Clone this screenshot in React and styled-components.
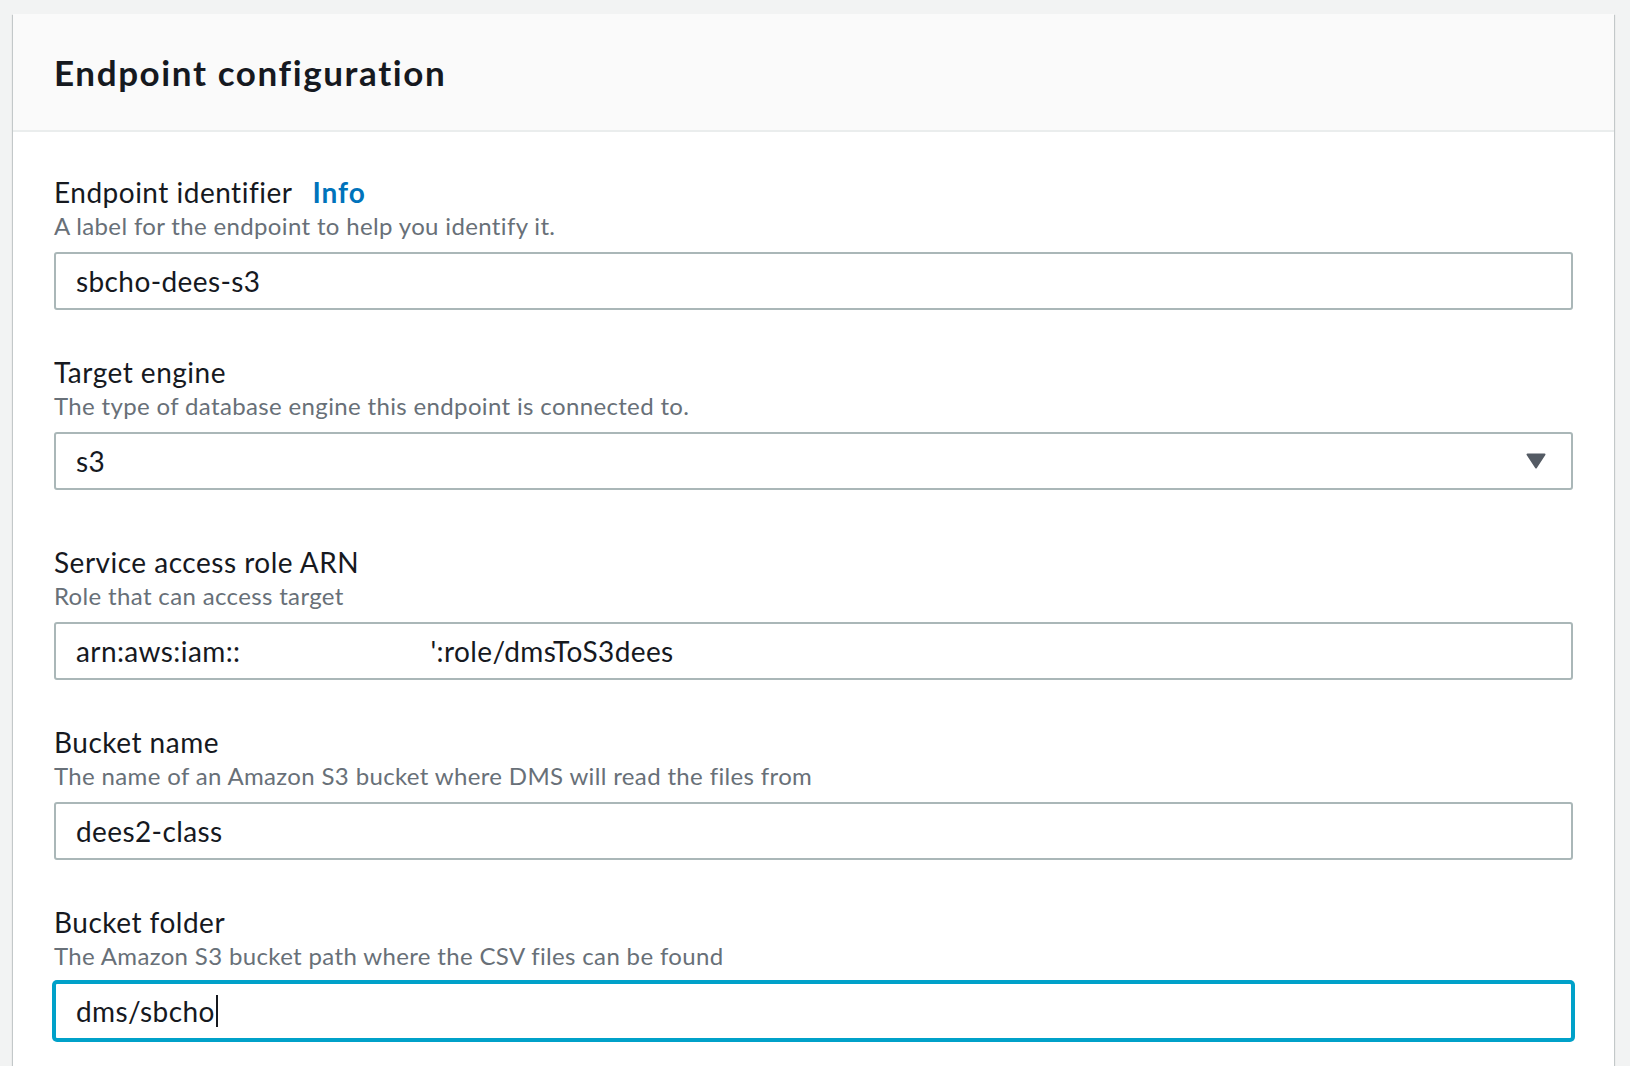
import React from 'react';
import styled, { createGlobalStyle } from 'styled-components';

const GlobalStyle = createGlobalStyle`
body {
    margin: 0;
    background: #f2f3f3;
    font-family: Lato, "Open Sans", sans-serif;
    color: #16191f;
}
`

const Page = styled.div`
padding: 14px 16px 0 13px;
`

const Panel = styled.section`
background: #fff;
box-shadow: 0 1px 1px 0 rgba(0,28,36,.3), 1px 1px 1px 0 rgba(0,28,36,.15), -1px 1px 1px 0 rgba(0,28,36,.15);
`

const Header = styled.header`
height: 116px;
display: flex;
align-items: center;
padding: 0 41px;
background: #fafafa;
border-bottom: 2px solid #eaeded;
`

const Title = styled.h2`
margin: 0;
font-size: 35px;
font-weight: 700;
line-height: 44px;
letter-spacing: 1.6px;
`

const Body = styled.div`
padding: 42px 41px;
display: flex;
flex-direction: column;
gap: 44px;
`

const Field = styled.div`
display: flex;
flex-direction: column;
`

const Label = styled.div`
font-size: 28px;
line-height: 36px;
letter-spacing: 0.5px;
`

const InfoLink = styled.a`
margin-left: 20px;
color: #0073bb;
font-weight: 700;
letter-spacing: 1px;
text-decoration: none;
`

const Description = styled.div`
font-size: 24px;
line-height: 32px;
letter-spacing: 0.35px;
color: #687078;
margin-bottom: 10px;
`

const Box = styled.div`
box-sizing: border-box;
height: 58px;
display: flex;
align-items: center;
padding: 0 20px;
background: #fff;
border: 2px solid ${props => props.focused ? "#00a1c9" : "#aab7b8"};
border-radius: 3px;
box-shadow: ${props => props.focused ? "0 0 0 2px #00a1c9" : "none"};
font-size: 28px;
letter-spacing: 0.4px;
color: #16191f;
white-space: pre;
`

const SelectBox = styled(Box)`
justify-content: space-between;
padding-right: 25px;
margin-bottom: 10px;
`

// the account number is blanked out in the reference
const Redaction = styled.span`
display: inline-block;
width: 190px;
height: 1px;
`

const Caret = styled.span`
display: inline-block;
width: 2px;
height: 32px;
margin-left: 1px;
background: #16191f;
`

function ArrowDown() {
    return (
        <svg width="20" height="16" viewBox="0 0 20 16">
            <path d="M1.5 1.5 L18.5 1.5 L10 14.5 Z" fill="#545b64" stroke="#545b64" strokeWidth="2" strokeLinejoin="round" />
        </svg>
    );
}

function FormField(props) {
    return (
        <Field>
            <Label>
                {props.label}
                {props.info && <InfoLink href="#">Info</InfoLink>}
            </Label>
            <Description>{props.description}</Description>
            {props.children}
        </Field>
    );
}

export default function App() {
    return (
        <Page>
            <GlobalStyle />
            <Panel>
                <Header>
                    <Title>Endpoint configuration</Title>
                </Header>
                <Body>
                    <FormField label="Endpoint identifier" info description="A label for the endpoint to help you identify it.">
                        <Box>sbcho-dees-s3</Box>
                    </FormField>
                    <FormField label="Target engine" description="The type of database engine this endpoint is connected to.">
                        <SelectBox>
                            <span>s3</span>
                            <ArrowDown />
                        </SelectBox>
                    </FormField>
                    <FormField label="Service access role ARN" description="Role that can access target">
                        <Box>arn:aws:iam::<Redaction />':role/dmsToS3dees</Box>
                    </FormField>
                    <FormField label="Bucket name" description="The name of an Amazon S3 bucket where DMS will read the files from">
                        <Box>dees2-class</Box>
                    </FormField>
                    <FormField label="Bucket folder" description="The Amazon S3 bucket path where the CSV files can be found">
                        <Box focused>dms/sbcho<Caret /></Box>
                    </FormField>
                </Body>
            </Panel>
        </Page>
    );
}
